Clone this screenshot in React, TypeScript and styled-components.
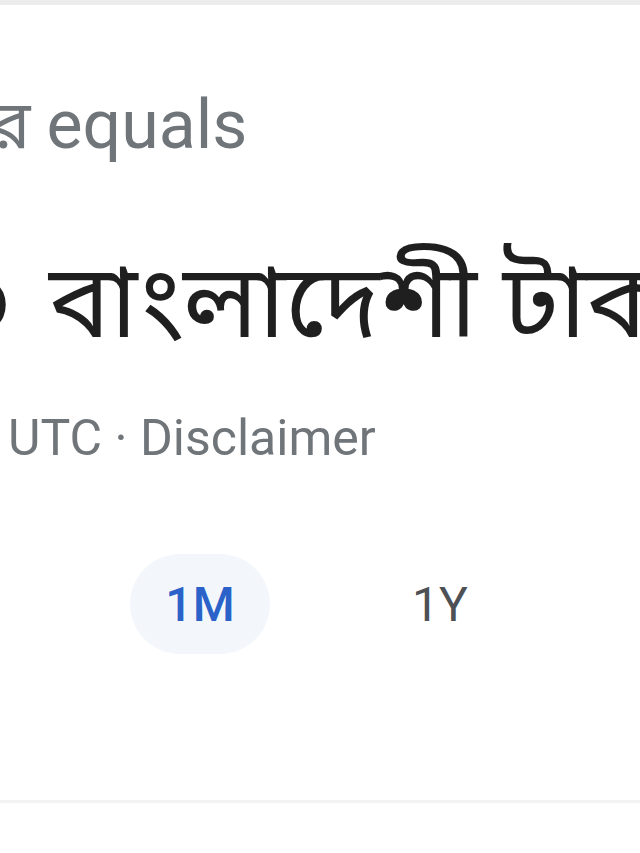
import React from "react";
import styled, { createGlobalStyle } from "styled-components";

const Global = createGlobalStyle`
  html, body { margin: 0; padding: 0; background: #ffffff; }
  body { font-family: Roboto, "Noto Sans", Arial, sans-serif; }
`;

const Page = styled.div`
  width: 640px;
  height: 853px;
  overflow: hidden;
  background: #ffffff;
  display: flex;
  flex-direction: column;
  border-top: 5px solid #ececec;
  box-sizing: border-box;
`;

const Card = styled.section`
  display: flex;
  flex-direction: column;
  height: 795px;
  border-bottom: 3px solid #f3f3f3;
  overflow: hidden;
`;

const Line = styled.div<{ $size: number; $color: string; $shift: number; $top: number }>`
  white-space: nowrap;
  font-family: Roboto, "Noto Sans Bengali", "Noto Sans", sans-serif;
  font-size: ${(p) => p.$size}px;
  line-height: 1;
  color: ${(p) => p.$color};
  margin-left: ${(p) => p.$shift}px;
  margin-top: ${(p) => p.$top}px;
`;

const Lead = styled.span<{ $gap: number }>`
  margin-right: ${(p) => p.$gap}px;
`;

const Tabs = styled.nav`
  display: flex;
  align-items: center;
  margin-left: -110px;
  margin-top: 91px;
  gap: 100px;
`;

const Tab = styled.div<{ $active?: boolean }>`
  flex: 0 0 140px;
  height: 100px;
  border-radius: 50px;
  display: flex;
  align-items: center;
  justify-content: center;
  font-family: Roboto, "Noto Sans", sans-serif;
  font-size: 48px;
  font-weight: ${(p) => (p.$active ? 500 : 400)};
  color: ${(p) => (p.$active ? "#2a62c9" : "#4d5156")};
  background: ${(p) => (p.$active ? "#f3f7fc" : "transparent")};
`;

export default function App() {
  return (
    <>
      <Global />
      <Page>
        <Card>
          <Line $size={68} $color="#70757a" $shift={-10} $top={86}>
            <Lead $gap={16}>র</Lead>equals
          </Line>
          <Line $size={103} $color="#1f1f1f" $shift={-48} $top={91}>
            <Lead $gap={36}>০</Lead>বাংলাদেশী টাকা
          </Line>
          <Line $size={50} $color="#70757a" $shift={8} $top={60}>
            UTC · Disclaimer
          </Line>
          <Tabs>
            <Tab>5D</Tab>
            <Tab $active>1M</Tab>
            <Tab>1Y</Tab>
            <Tab>5Y</Tab>
          </Tabs>
        </Card>
      </Page>
    </>
  );
}
